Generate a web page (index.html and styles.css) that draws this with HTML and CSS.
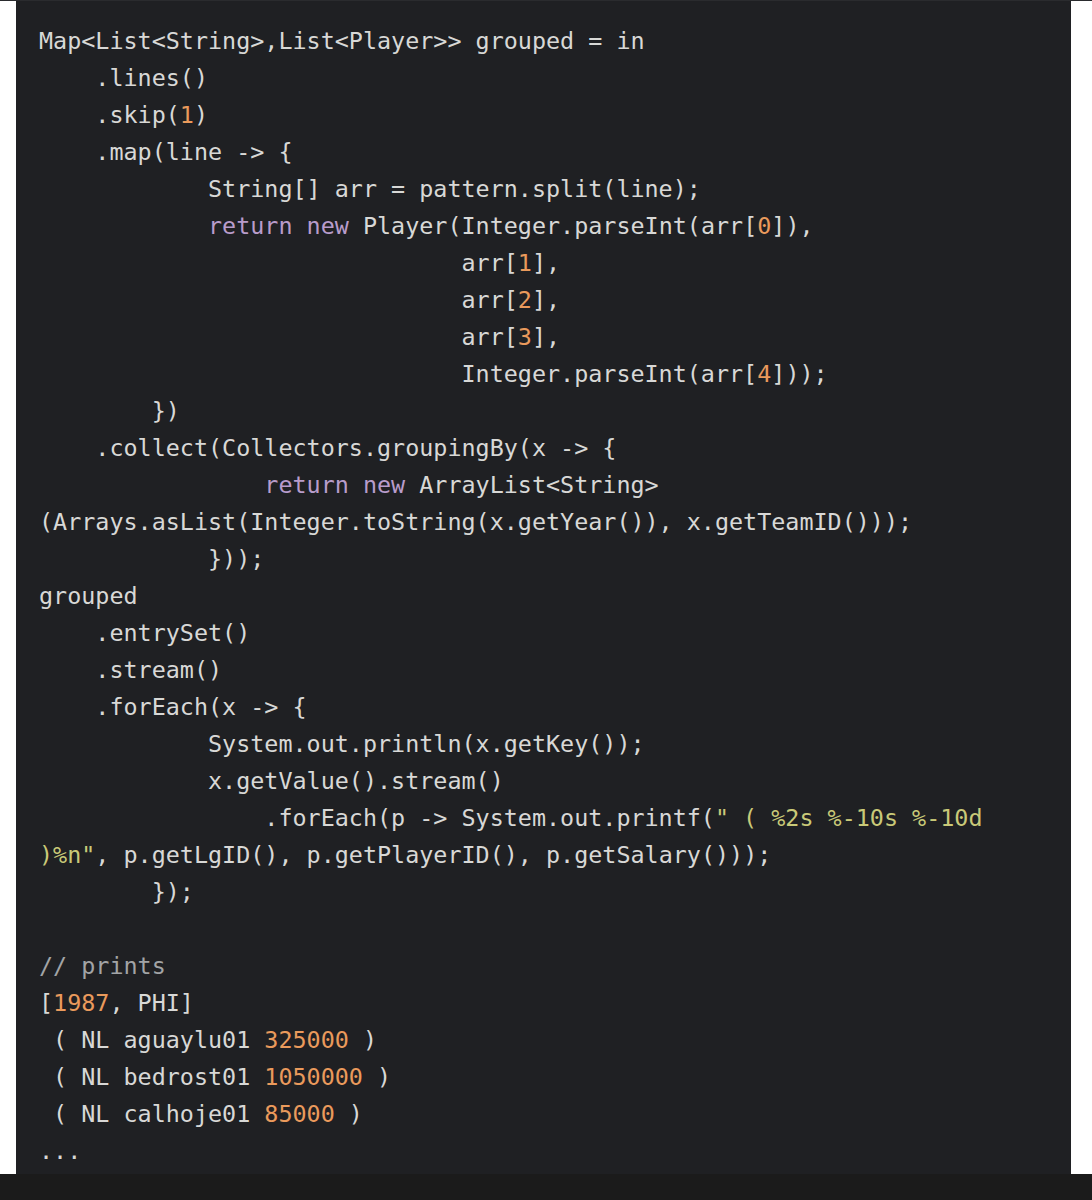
FILE: index.html
```html
<!DOCTYPE html>
<html>
<head>
<meta charset="utf-8">
<link rel="stylesheet" href="styles.css">
</head>
<body>
<div class="top-line"></div>
<div class="page">
<pre class="code">Map&lt;List&lt;String&gt;,List&lt;Player&gt;&gt; grouped = in
    .lines()
    .skip(<span class="n">1</span>)
    .map(line -&gt; {
            String[] arr = pattern.split(line);
            <span class="k">return</span> <span class="k">new</span> Player(Integer.parseInt(arr[<span class="n">0</span>]),
                              arr[<span class="n">1</span>],
                              arr[<span class="n">2</span>],
                              arr[<span class="n">3</span>],
                              Integer.parseInt(arr[<span class="n">4</span>]));
        })
    .collect(Collectors.groupingBy(x -&gt; {
                <span class="k">return</span> <span class="k">new</span> ArrayList&lt;String&gt;
(Arrays.asList(Integer.toString(x.getYear()), x.getTeamID()));
            }));
grouped
    .entrySet()
    .stream()
    .forEach(x -&gt; {
            System.out.println(x.getKey());
            x.getValue().stream()
                .forEach(p -&gt; System.out.printf(<span class="s">" ( %2s %-10s %-10d</span>
<span class="s">)%n"</span>, p.getLgID(), p.getPlayerID(), p.getSalary()));
        });

<span class="c">// prints</span>
[<span class="n">1987</span>, PHI]
 ( NL aguaylu01 <span class="n">325000</span> )
 ( NL bedrost01 <span class="n">1050000</span> )
 ( NL calhoje01 <span class="n">85000</span> )
...</pre>
</div>
<div class="bottom-bar"></div>
</body>
</html>
```
FILE: styles.css
```css
html, body {
  margin: 0;
  padding: 0;
  background: #ffffff;
}
body {
  width: 1092px;
  height: 1200px;
  overflow: hidden;
  display: flex;
  flex-direction: column;
}
.top-line {
  height: 1px;
  background: #2a2b2e;
}
.page {
  height: 1173px;
  padding: 0 21px 0 16px;
  box-sizing: border-box;
}
.code {
  margin: 0;
  height: 100%;
  box-sizing: border-box;
  background: #1f2023;
  color: #d8d8d6;
  font-family: "DejaVu Sans Mono", "Liberation Mono", monospace;
  font-size: 23.4px;
  line-height: 37px;
  padding: 22px 0 0 23px;
  white-space: pre;
  overflow: hidden;
}
.n { color: #ea9a5c; }
.k { color: #b89ccb; }
.s { color: #c9c978; }
.c { color: #a2a4a6; }
.bottom-bar {
  flex: 1;
  background: #1b1b1b;
}
```
